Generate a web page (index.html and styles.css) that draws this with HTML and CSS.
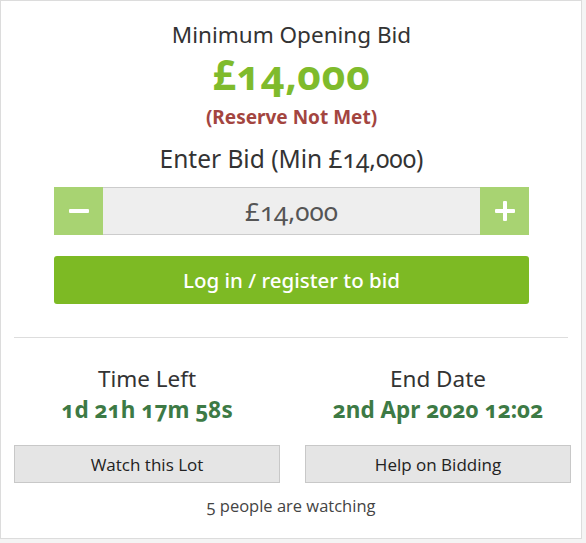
FILE: index.html
```html
<!DOCTYPE html>
<html>
<head>
<meta charset="utf-8">
<link rel="stylesheet" href="styles.css">
</head>
<body>
<div class="card">
  <div class="bid">
    <div class="label">Minimum Opening Bid</div>
    <div class="amount">£14,000</div>
    <div class="reserve">(Reserve Not Met)</div>
    <div class="label enter">Enter Bid (Min £14,000)</div>
    <div class="stepper">
      <button class="step"><svg width="20" height="20" viewBox="0 0 20 20"><rect x="0" y="8" width="20" height="4" rx="1" fill="#fff"/></svg></button>
      <div class="value">£14,000</div>
      <button class="step"><svg width="20" height="20" viewBox="0 0 20 20"><rect x="0" y="8" width="20" height="4" rx="1" fill="#fff"/><rect x="8" y="0" width="4" height="20" rx="1" fill="#fff"/></svg></button>
    </div>
    <button class="login">Log in / register to bid</button>
  </div>
  <hr class="divider">
  <div class="cols">
    <div class="col">
      <div class="label">Time Left</div>
      <div class="stat">1d 21h 17m 58s</div>
      <button class="btn">Watch this Lot</button>
    </div>
    <div class="col">
      <div class="label">End Date</div>
      <div class="stat">2nd Apr 2020 12:02</div>
      <button class="btn">Help on Bidding</button>
    </div>
  </div>
  <div class="watching">5 people are watching</div>
</div>
</body>
</html>
```
FILE: styles.css
```css
html, body {
  margin: 0;
  padding: 0;
}
body {
  background: #f4f4f4;
  font-family: "Noto Sans", "Open Sans", sans-serif;
  font-variant-numeric: oldstyle-nums;
  color: #333;
  height: 543px;
}
.card {
  width: 580px;
  height: 537px;
  background: #fff;
  border: 1px solid #dcdcdc;
  box-sizing: content-box;
  padding: 0;
}
.bid {
  padding: 19px 52px 0 53px;
  text-align: center;
}
.label {
  font-size: 22.5px;
  line-height: 30px;
  color: #333;
}
.amount {
  font-size: 41px;
  font-weight: 700;
  line-height: 46px;
  letter-spacing: 0.5px;
  color: #7fbb2c;
  margin-top: 1px;
}
.reserve {
  font-size: 19px;
  font-weight: 700;
  line-height: 24px;
  color: #a34540;
  margin-top: 8px;
}
.enter {
  font-size: 24.5px;
  margin-top: 15px;
}
.stepper {
  display: flex;
  height: 48px;
  margin-top: 13px;
}
.step {
  width: 49px;
  border: 0;
  padding: 0;
  background: #a8d372;
  display: flex;
  align-items: center;
  justify-content: center;
}
.value {
  flex: 1;
  background: #eee;
  border-top: 1px solid #ccc;
  border-bottom: 1px solid #ccc;
  display: flex;
  align-items: center;
  justify-content: center;
  font-size: 26px;
  color: #555;
}
.login {
  display: block;
  width: 100%;
  height: 48px;
  margin-top: 21px;
  border: 0;
  border-radius: 3px;
  background: #7dba24;
  color: #fff;
  font-family: inherit;
  font-size: 20.5px;
  font-weight: 500;
}
.divider {
  border: 0;
  border-top: 1px solid #ddd;
  margin: 33px 13px 0 13px;
}
.cols {
  display: grid;
  grid-template-columns: 266px 266px;
  column-gap: 25px;
  padding: 26px 0 0 13px;
  text-align: center;
}
.stat {
  font-size: 22.5px;
  font-weight: 700;
  line-height: 30px;
  color: #3d7a45;
  margin-top: 1px;
}
.btn {
  display: block;
  width: 100%;
  height: 38px;
  margin-top: 20px;
  background: #e5e5e5;
  border: 1px solid #c8c8c8;
  font-family: "Open Sans", sans-serif;
  font-size: 17px;
  color: #222;
}
.watching {
  text-align: center;
  font-family: "Open Sans", sans-serif;
  font-size: 16.5px;
  color: #444;
  margin-top: 11px;
}
```
